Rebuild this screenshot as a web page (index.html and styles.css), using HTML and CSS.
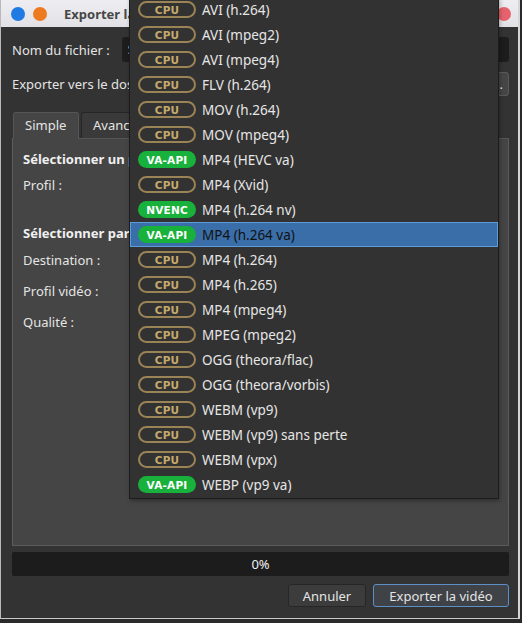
FILE: index.html
```html
<!DOCTYPE html>
<html lang="fr">
<head>
<meta charset="utf-8">
<title>Exporter la vidéo</title>
<link rel="stylesheet" href="styles.css">
</head>
<body>
<div class="screen">
  <div class="window">
    <div class="titlebar">
      <span class="dot dot-blue"></span>
      <span class="dot dot-orange"></span>
      <span class="title">Exporter la vidéo</span>
      <span class="dot dot-red"></span>
    </div>
    <div class="content">
      <div class="row row-name">
        <span class="label">Nom du fichier :</span>
        <div class="entry">Sans titre</div>
      </div>
      <div class="row row-dir">
        <span class="label">Exporter vers le dossier :</span>
        <div class="dir-button">...</div>
      </div>
      <div class="tabs">
        <div class="tab tab-active">Simple</div>
        <div class="tab">Avancé</div>
      </div>
      <div class="panel">
        <div class="heading h1">Sélectionner un profil</div>
        <div class="field f-profil">Profil :</div>
        <div class="heading h2">Sélectionner parmi les profils</div>
        <div class="field f-dest">Destination :</div>
        <div class="field f-video">Profil vidéo :</div>
        <div class="field f-qual">Qualité :</div>
      </div>
      <div class="progress">0%</div>
      <div class="actions">
        <div class="btn">Annuler</div>
        <div class="btn btn-default">Exporter la vidéo</div>
      </div>
    </div>
  </div>

  <div class="popup">
    <div class="item"><span class="badge cpu">CPU</span><span class="name">AVI (h.264)</span></div>
    <div class="item"><span class="badge cpu">CPU</span><span class="name">AVI (mpeg2)</span></div>
    <div class="item"><span class="badge cpu">CPU</span><span class="name">AVI (mpeg4)</span></div>
    <div class="item"><span class="badge cpu">CPU</span><span class="name">FLV (h.264)</span></div>
    <div class="item"><span class="badge cpu">CPU</span><span class="name">MOV (h.264)</span></div>
    <div class="item"><span class="badge cpu">CPU</span><span class="name">MOV (mpeg4)</span></div>
    <div class="item"><span class="badge hw">VA-API</span><span class="name">MP4 (HEVC va)</span></div>
    <div class="item"><span class="badge cpu">CPU</span><span class="name">MP4 (Xvid)</span></div>
    <div class="item"><span class="badge hw">NVENC</span><span class="name">MP4 (h.264 nv)</span></div>
    <div class="item item-selected"><span class="badge hw">VA-API</span><span class="name">MP4 (h.264 va)</span></div>
    <div class="item"><span class="badge cpu">CPU</span><span class="name">MP4 (h.264)</span></div>
    <div class="item"><span class="badge cpu">CPU</span><span class="name">MP4 (h.265)</span></div>
    <div class="item"><span class="badge cpu">CPU</span><span class="name">MP4 (mpeg4)</span></div>
    <div class="item"><span class="badge cpu">CPU</span><span class="name">MPEG (mpeg2)</span></div>
    <div class="item"><span class="badge cpu">CPU</span><span class="name">OGG (theora/flac)</span></div>
    <div class="item"><span class="badge cpu">CPU</span><span class="name">OGG (theora/vorbis)</span></div>
    <div class="item"><span class="badge cpu">CPU</span><span class="name">WEBM (vp9)</span></div>
    <div class="item"><span class="badge cpu">CPU</span><span class="name">WEBM (vp9) sans perte</span></div>
    <div class="item"><span class="badge cpu">CPU</span><span class="name">WEBM (vpx)</span></div>
    <div class="item"><span class="badge hw">VA-API</span><span class="name">WEBP (vp9 va)</span></div>
  </div>
</div>
</body>
</html>
```

FILE: styles.css
```css
* { box-sizing: border-box; }

html, body {
  margin: 0;
  padding: 0;
  background: #1a1a1a;
}

body {
  font-family: "Noto Sans", "DejaVu Sans", sans-serif;
  font-size: 13px;
  color: #e4e4e4;
}

.screen {
  position: relative;
  width: 522px;
  height: 623px;
  overflow: hidden;
  background: #2a2a2a;
}

.window {
  width: 520px;
  height: 619px;
  background: #333333;
  border-left: 1px solid #b9b9b9;
  border-right: 2px solid #d6d6d6;
  border-bottom: 1px solid #c9c9c9;
  display: flex;
  flex-direction: column;
}

.titlebar {
  height: 27px;
  flex: none;
  background: linear-gradient(#eeeef2, #e2e2e6);
  display: flex;
  align-items: center;
  padding: 0 7px 0 10px;
  gap: 8px;
}

.dot {
  width: 14px;
  height: 14px;
  border-radius: 50%;
  flex: none;
}
.dot-blue { background: #1f7be3; }
.dot-orange { background: #ee7a1f; }
.dot-red { background: #e8626d; margin-left: auto; }

.title {
  margin-left: 9px;
  font-weight: bold;
  color: #474747;
  font-size: 13px;
}

.content {
  flex: 1;
  display: flex;
  flex-direction: column;
  padding: 10px 9px 0 11px;
}

.row {
  display: flex;
  align-items: center;
}

.row-name { height: 25px; }
.row-dir { height: 24px; margin-top: 10px; }

.label { white-space: nowrap; }

.entry {
  margin-left: 12px;
  flex: 1;
  height: 25px;
  background: #1d1d1d;
  border-radius: 3px;
  padding: 3px 6px;
  color: #e4e4e4;
}

.dir-button {
  margin-left: auto;
  width: 60px;
  height: 24px;
  background: #464646;
  border: 1px solid #5a5a5a;
  border-radius: 3px;
  text-align: right;
  padding: 2px 5px;
  color: #e4e4e4;
}

.tabs {
  display: flex;
  gap: 2px;
  margin-top: 16px;
  padding-left: 1px;
  height: 26px;
  position: relative;
  z-index: 1;
}

.tab {
  height: 26px;
  padding: 3px 11px 0;
  background: #3a3a3a;
  border: 1px solid #262626;
  border-bottom: none;
  border-radius: 3px 3px 0 0;
  color: #e4e4e4;
}

.tab-active {
  background: #454545;
  border-color: #555555;
  height: 27px;
  width: 66px;
}

.panel {
  height: 408px;
  background: #454545;
  border: 1px solid #5c5c5c;
  border-top-color: #555555;
  display: flex;
  flex-direction: column;
  padding: 10px 10px 0 10px;
}

.heading {
  font-weight: bold;
  color: #f0f0f0;
}

.field { color: #e4e4e4; }

.h1 { margin-top: 1px; }
.f-profil { margin-top: 8px; }
.h2 { margin-top: 30px; }
.f-dest { margin-top: 9px; }
.f-video { margin-top: 13px; }
.f-qual { margin-top: 13px; }

.progress {
  margin-top: 6px;
  height: 24px;
  background: #1c1c1c;
  border-radius: 2px;
  display: flex;
  align-items: center;
  justify-content: center;
  color: #f0f0f0;
}

.actions {
  display: flex;
  justify-content: flex-end;
  gap: 7px;
  margin-top: 8px;
}

.btn {
  height: 23px;
  padding: 0 13px;
  display: flex;
  align-items: center;
  background: #3c3c3c;
  border: 1px solid #262626;
  border-radius: 3px;
  color: #e4e4e4;
  width: 78px;
  justify-content: center;
}

.btn-default {
  width: 136px;
  background: #3f4347;
  border-color: #5d8fc7;
}

/* dropdown popup overlay */
.popup {
  position: absolute;
  z-index: 10;
  left: 129px;
  top: -3px;
  width: 370px;
  background: #323232;
  border: 1px solid #1c1c1c;
  border-top: none;
  padding-bottom: 1px;
  box-shadow: 1px 2px 4px rgba(0,0,0,0.3);
}

.item {
  height: 25px;
  display: flex;
  align-items: center;
  padding-left: 7px;
  border: 1px solid transparent;
}

.item-selected {
  background: #3a6ea8;
  border-color: #5e9bd8;
}

.item-selected .name { color: #111111; }

.badge {
  width: 58px;
  height: 17px;
  border-radius: 9px;
  display: flex;
  align-items: center;
  justify-content: center;
  font-family: "DejaVu Sans", sans-serif;
  font-weight: bold;
  font-size: 10.5px;
  margin-right: 6px;
  flex: none;
  letter-spacing: 0.2px;
}

.cpu {
  border: 2px solid #9a8355;
  color: #c6a96c;
}

.hw {
  background: #17b13b;
  color: #ffffff;
}

.name {
  color: #e6e6e6;
  white-space: nowrap;
  font-size: 13.5px;
}
```
